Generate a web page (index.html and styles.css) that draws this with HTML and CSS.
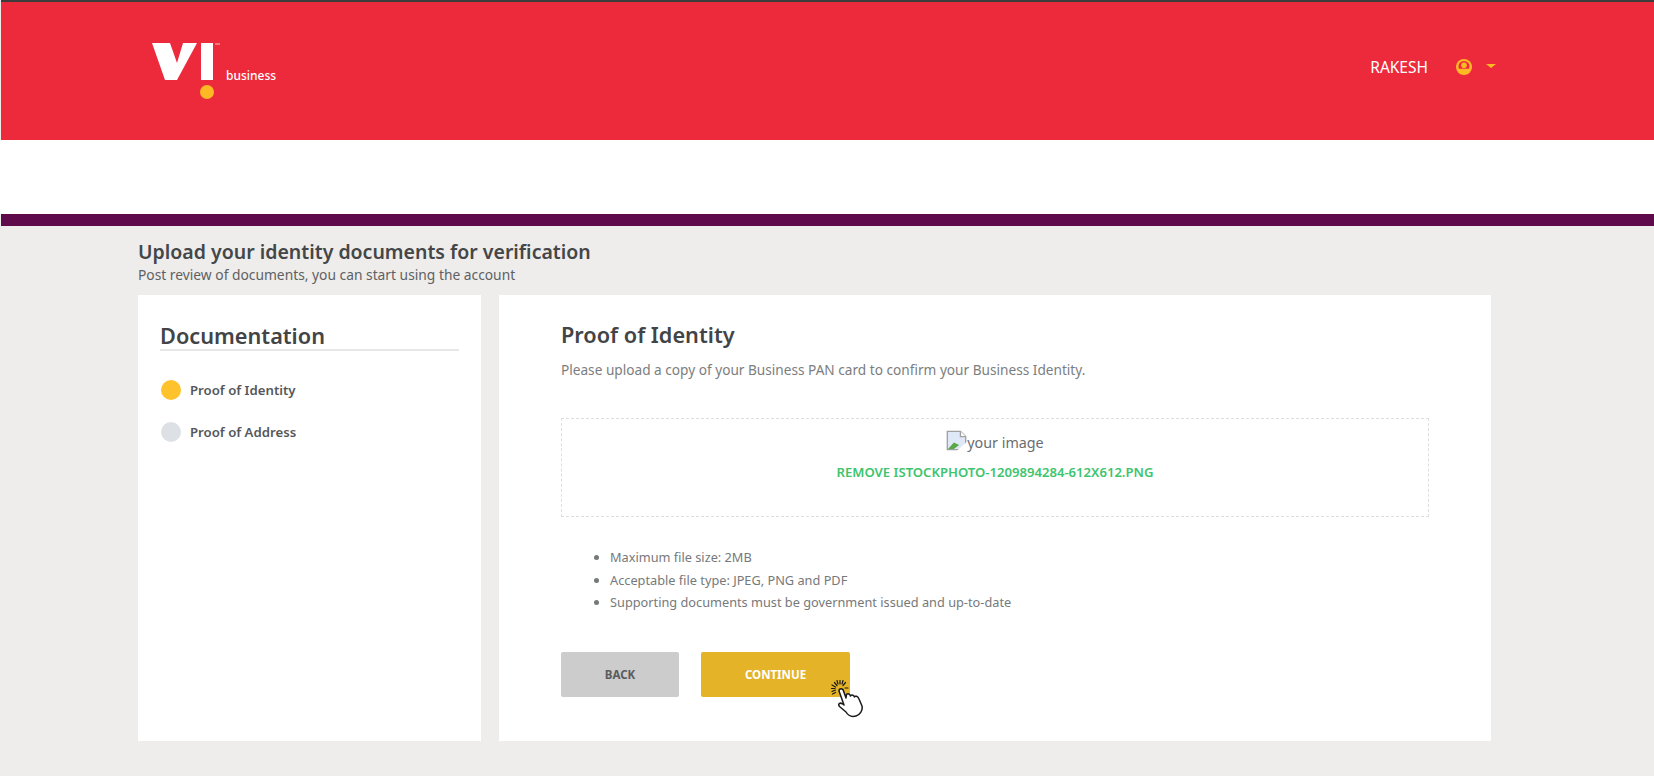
FILE: index.html
```html
<!DOCTYPE html>
<html lang="en">
<head>
<meta charset="utf-8">
<title>Upload documents</title>
<link rel="stylesheet" href="styles.css">
</head>
<body>
<header class="topbar">
  <div class="brand">
    <svg class="logo" width="72" height="57" viewBox="0 0 72 57" aria-hidden="true">
      <path d="M0 0H18L25 20L31 0H45L25 37H13Z" fill="#fff"/>
      <rect x="49" y="0" width="12" height="37" fill="#fff"/>
      <circle cx="55" cy="49" r="7" fill="#fdb924"/>
      <path d="M63 1h5" stroke="#fff" stroke-width="1" opacity=".7"/>
    </svg>
    <span class="brand-sub">business</span>
  </div>
  <div class="user">
    <span class="user-name">RAKESH</span>
    <svg class="user-icon" width="16" height="16" viewBox="0 0 16 16" aria-hidden="true">
      <circle cx="8" cy="8" r="8" fill="#fdb924"/>
      <circle cx="8" cy="7.500" r="5.500" fill="#ee2b3e"/>
      <circle cx="8" cy="6.200" r="2.800" fill="#fdb924"/>
      <path d="M2 9.800H14V13L8 15.500L2 13Z" fill="#fdb924"/>
    </svg>
    <span class="caret"></span>
  </div>
</header>
<div class="whitebar"></div>
<div class="purplebar"></div>
<main class="content">
  <h1 class="page-title">Upload your identity documents for verification</h1>
  <p class="page-sub">Post review of documents, you can start using the account</p>
  <div class="cards">
    <aside class="card side">
      <h2 class="side-title">Documentation</h2>
      <ul class="steps">
        <li class="step"><span class="dot dot-on"></span>Proof of Identity</li>
        <li class="step"><span class="dot"></span>Proof of Address</li>
      </ul>
    </aside>
    <section class="card panel">
      <h2 class="panel-title">Proof of Identity</h2>
      <p class="panel-text">Please upload a copy of your Business PAN card to confirm your Business Identity.</p>
      <div class="dropzone">
        <div class="preview">
          <svg class="broken" width="21" height="21" viewBox="0 0 16 16" aria-hidden="true">
            <path d="M1 1H11L15 5V15H1Z" fill="#dfe8f6" stroke="#a0a0a0"/>
            <path d="M1.500 14.500L6 9.500L10 11.500L6 14.500Z" fill="#5aa845"/>
            <path d="M11 1V5H15" fill="#fff" stroke="#a0a0a0"/>
            <path d="M8 16L16 9V16Z" fill="#fff"/>
          </svg><span>your image</span>
        </div>
        <div class="remove">REMOVE ISTOCKPHOTO-1209894284-612X612.PNG</div>
      </div>
      <ul class="notes">
        <li>Maximum file size: 2MB</li>
        <li>Acceptable file type: JPEG, PNG and PDF</li>
        <li>Supporting documents must be government issued and up-to-date</li>
      </ul>
      <div class="actions">
        <button class="btn btn-back" type="button">BACK</button>
        <button class="btn btn-next" type="button">CONTINUE
          <svg class="pointer" width="38" height="38" viewBox="0 0 38 38" aria-hidden="true">
            <g stroke="#1a1a1a" stroke-width="1.200" stroke-linecap="round">
              <path d="M9 0.500V4M3.500 2.500L6 5.500M0.500 8.500H4M1.500 14L4.500 12.500M14.500 2.500L12 5.500M17 8H14"/>
              <path d="M6 0.500L7 4M12 0.500L11 4M1 5L4.500 7M1 11.500L4.500 10"/>
            </g>
            <path d="M8 11C8 8 12 8 12.500 11L15 18L15.500 14.500C17 13 19 14 19.500 16C20 14.500 22.500 14.500 23.500 17C24 15.500 27 16 28 19L31 26C32 30 29 35 25 36C21 37 17 35.500 15 32L8.500 26.500C6.500 24 9 22 11.500 24L13 25Z" fill="#fff" stroke="#1a1a1a" stroke-width="1.500" stroke-linejoin="round"/>
          </svg>
        </button>
      </div>
    </section>
  </div>
</main>
</body>
</html>
```
FILE: styles.css
```css
* { box-sizing: border-box; }
html, body { margin: 0; padding: 0; }
body {
  width: 1654px;
  height: 776px;
  overflow: hidden;
  background: #eeedeb;
  font-family: "Noto Sans", "Open Sans", sans-serif;
  color: #4a4d4e;
}
.topbar {
  height: 140px;
  background: #ec2a3c;
  border-top: 2px solid #3c3c3c;
  margin-left: 1px;
  padding: 41px 0 0 151px;
  display: flex;
  justify-content: space-between;
  align-items: flex-start;
}
.brand { display: flex; align-items: flex-start; }
.logo { display: block; }
.brand-sub {
  color: #fff;
  font-size: 12px;
  font-weight: 500;
  margin: 26px 0 0 2px;
  line-height: 14px;
}
.user {
  display: flex;
  align-items: center;
  margin: 14px 158px 0 0;
  height: 20px;
  color: #fff;
}
.user-name { font-size: 15.500px; line-height: 20px; }
.user-icon { margin-left: 28px; }
.caret {
  margin-left: 14px;
  width: 0;
  height: 0;
  border-left: 5px solid transparent;
  border-right: 5px solid transparent;
  border-top: 4px solid #fdb924;
  margin-bottom: 3px;
}
.whitebar { height: 74px; background: #fff; }
.purplebar { height: 12px; background: #5e0a4b; margin-left: 1px; }
.content { padding: 13px 163px 0 138px; }
.page-title {
  margin: 0;
  font-size: 19.500px;
  line-height: 26px;
  font-weight: 600;
  color: #444648;
}
.page-sub {
  margin: 0;
  font-size: 13.800px;
  line-height: 20px;
  color: #5e6163;
}
.cards {
  margin-top: 10px;
  display: flex;
  gap: 18px;
  height: 446px;
}
.card { background: #fff; }
.side { width: 343px; padding: 27px 22px; }
.side-title {
  margin: 0;
  font-size: 21.700px;
  line-height: 27px;
  font-weight: 600;
  color: #424446;
  border-bottom: 2px solid #e6e7e9;
}
.steps { list-style: none; margin: 29px 0 0; padding: 0; }
.step {
  display: flex;
  align-items: center;
  gap: 9px;
  height: 20px;
  margin-bottom: 22px;
  margin-left: 1px;
  font-size: 13.200px;
  font-weight: 600;
  color: #55585a;
}
.dot {
  width: 20px;
  height: 20px;
  border-radius: 50%;
  background: #dde1e6;
}
.dot-on { background: #fec22d; }
.panel { width: 992px; padding: 26px 62px; position: relative; }
.panel-title {
  margin: 0;
  font-size: 21.700px;
  line-height: 28px;
  font-weight: 600;
  color: #424446;
}
.panel-text {
  margin: 12px 0 0;
  font-size: 13.650px;
  line-height: 18px;
  color: #7b7e80;
}
.dropzone {
  margin-top: 39px;
  height: 99px;
  border: 1px dashed #dcdee0;
  display: flex;
  flex-direction: column;
  align-items: center;
  padding-top: 11px;
}
.preview {
  display: flex;
  align-items: center;
  font-size: 14.300px;
  line-height: 20px;
  color: #6a6d6f;
}
.broken { margin-bottom: 4px; }
.remove {
  margin-top: 8px;
  font-size: 13.100px;
  line-height: 18px;
  font-weight: 600;
  color: #3ec46d;
}
.notes {
  margin: 29px 0 0;
  padding-left: 49px;
  font-size: 12.750px;
  line-height: 22.500px;
  color: #76797b;
}
.actions { display: flex; gap: 22px; margin-top: 38px; }
.btn {
  height: 45px;
  border: 0;
  border-radius: 2px;
  font-family: inherit;
  font-size: 11.500px;
  font-weight: 700;
  padding: 0;
}
.btn-back { width: 118px; background: #cccccc; color: #5a5c5e; }
.btn-next { width: 149px; background: #e4b327; color: #fff; position: relative; }
.pointer { position: absolute; left: 130px; top: 28px; }
```
